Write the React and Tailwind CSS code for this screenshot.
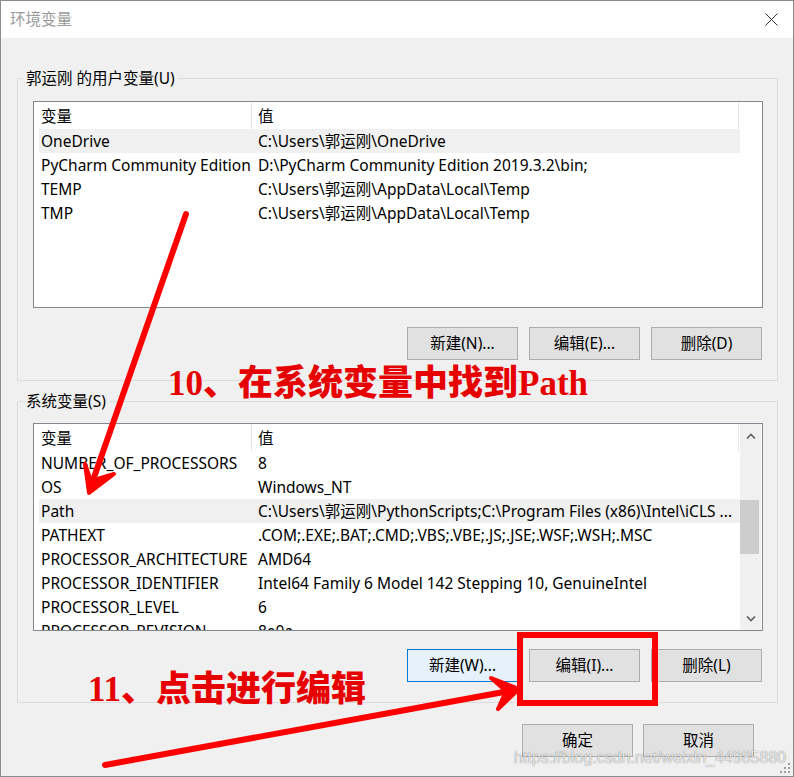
import React from "react";

const userVars = [
  ["OneDrive", "C:\\Users\\郭运刚\\OneDrive"],
  ["PyCharm Community Edition", "D:\\PyCharm Community Edition 2019.3.2\\bin;"],
  ["TEMP", "C:\\Users\\郭运刚\\AppData\\Local\\Temp"],
  ["TMP", "C:\\Users\\郭运刚\\AppData\\Local\\Temp"],
];

const sysVars = [
  ["NUMBER_OF_PROCESSORS", "8"],
  ["OS", "Windows_NT"],
  ["Path", "C:\\Users\\郭运刚\\PythonScripts;C:\\Program Files (x86)\\Intel\\iCLS ..."],
  ["PATHEXT", ".COM;.EXE;.BAT;.CMD;.VBS;.VBE;.JS;.JSE;.WSF;.WSH;.MSC"],
  ["PROCESSOR_ARCHITECTURE", "AMD64"],
  ["PROCESSOR_IDENTIFIER", "Intel64 Family 6 Model 142 Stepping 10, GenuineIntel"],
  ["PROCESSOR_LEVEL", "6"],
  ["PROCESSOR_REVISION", "8e0a"],
];

function Btn({ children, focused }) {
  return (
    <div
      className={
        focused
          ? "w-[111px] h-[33px] flex items-center justify-center border border-[#0078d7] bg-[#e5f1fb]"
          : "w-[111px] h-[33px] flex items-center justify-center border border-[#adadad] bg-[#e1e1e1]"
      }
    >
      {children}
    </div>
  );
}

function Chevron({ up }) {
  return (
    <svg width="10" height="6" viewBox="0 0 10 6">
      <polyline
        points={up ? "1,5.5 5,1.5 9,5.5" : "1,0.5 5,4.5 9,0.5"}
        fill="none"
        stroke="#606060"
        strokeWidth="1.6"
      />
    </svg>
  );
}

function VarList({ rows, hi, scroll, tall }) {
  return (
    <div
      className={
        tall
          ? "flex h-[208px] bg-white border border-[#828790] overflow-hidden"
          : "flex h-[207px] bg-white border border-[#828790] overflow-hidden"
      }
    >
      <div className="w-[706px] pl-[5px] overflow-hidden">
        <div className="flex h-[27px] w-[700px] items-center border-r border-[#e5e5e5]">
          <div className="w-[213px] h-full pl-[2px] pt-[2px] flex items-center border-r border-[#e5e5e5]">变量</div>
          <div className="pl-[6px] pt-[2px]">值</div>
        </div>
        {rows.map(([k, v], i) => (
          <div
            key={k}
            className={
              i === hi
                ? "flex h-[24px] items-center pt-[2px] bg-[#f0f0f0] whitespace-nowrap"
                : "flex h-[24px] items-center pt-[2px] whitespace-nowrap"
            }
          >
            <div className="w-[213px] shrink-0 pl-[2px] overflow-hidden">{k}</div>
            <div className="pl-[6px]">{v}</div>
          </div>
        ))}
      </div>
      {scroll ? (
        <div className="w-[21px] flex flex-col bg-[#f0f0f0]">
          <div className="h-[23px] flex items-center justify-center">
            <Chevron up />
          </div>
          <div className="h-[53px]" />
          <div className="h-[54px] w-[19px] bg-[#cdcdcd]" />
          <div className="flex-1" />
          <div className="h-[23px] flex items-center justify-center">
            <Chevron />
          </div>
        </div>
      ) : (
        <div className="w-[21px]" />
      )}
    </div>
  );
}

export default function App() {
  return (
    <div className="relative w-[794px] h-[777px] overflow-hidden bg-[#f0f0f0] border border-[#8c8c8c] text-[15.5px] text-black font-['Noto_Sans','Noto_Sans_CJK_SC',sans-serif]">
      <div className="h-[37px] bg-white flex items-center justify-between pl-[9px] pr-[15px]">
        <span className="text-[#9a9a9a]">环境变量</span>
        <svg width="13" height="13" viewBox="0 0 13 13">
          <path d="M0.5 0.5 L12.5 12.5 M12.5 0.5 L0.5 12.5" stroke="#333" strokeWidth="1" />
        </svg>
      </div>

      <div className="pl-[16px] pr-[15px]">
        <div className="relative mt-[40px] border border-[#dcdcdc] pt-[22px] pb-[20px] pl-[15px] pr-[14px]">
          <span className="absolute -top-[11px] left-[5px] px-[3px] leading-[20px] bg-[#f0f0f0]">
            郭运刚 的用户变量(U)
          </span>
          <VarList rows={userVars} hi={0} />
          <div className="mt-[19px] flex justify-end gap-[11px] pr-[1px]">
            <Btn>新建(N)...</Btn>
            <Btn>编辑(E)...</Btn>
            <Btn>删除(D)</Btn>
          </div>
        </div>

        <div className="relative mt-[20px] border border-[#dcdcdc] pt-[21px] pb-[20px] pl-[15px] pr-[14px]">
          <span className="absolute -top-[11px] left-[5px] px-[3px] leading-[20px] bg-[#f0f0f0]">
            系统变量(S)
          </span>
          <VarList rows={sysVars} hi={2} scroll tall />
          <div className="mt-[18px] flex justify-end gap-[11px] pr-[1px]">
            <Btn focused>新建(W)...</Btn>
            <Btn>编辑(I)...</Btn>
            <Btn>删除(L)</Btn>
          </div>
        </div>

        <div className="mt-[21px] flex justify-end gap-[10px] pr-[24px]">
          <Btn>确定</Btn>
          <Btn>取消</Btn>
        </div>
      </div>

      {/* annotations */}
      <div className="absolute left-[167px] top-[365px] text-[35px] leading-[36px] font-black text-[#e60000] whitespace-nowrap font-['Liberation_Serif','Noto_Sans_CJK_SC',serif]">
        10、在系统变量中找到Path
      </div>
      <div className="absolute left-[87px] top-[671px] text-[35px] leading-[36px] font-black text-[#e60000] whitespace-nowrap font-['Liberation_Serif','Noto_Sans_CJK_SC',serif]">
        11、点击进行编辑
      </div>

      <svg className="absolute left-0 top-0 pointer-events-none" width="794" height="777" viewBox="0 0 794 777">
        <g stroke="#ff0000" strokeLinecap="round" strokeLinejoin="round" fill="none">
          <line x1="185" y1="213" x2="89" y2="488" strokeWidth="6" />
          <polygon points="84,463 88,492 113,473 90,480" fill="#ff0000" strokeWidth="4" />
          <line x1="104" y1="764" x2="514" y2="689" strokeWidth="6" />
          <polygon points="490,677 518,688 497,708 505,690" fill="#ff0000" strokeWidth="4" />
          <rect x="519" y="634" width="135" height="68" strokeWidth="6" strokeLinecap="butt" strokeLinejoin="miter" />
        </g>
      </svg>

      <div className="absolute left-[513px] top-[746px] text-[16px] leading-[22px] whitespace-nowrap text-white/80 font-['Liberation_Sans',sans-serif] [text-shadow:0_0_1px_rgba(0,0,0,0.6)]">
        https://blog.csdn.net/weixin_44985880
      </div>

      <svg className="absolute right-[2px] bottom-[2px]" width="12" height="12" viewBox="0 0 12 12">
        <g fill="#a0a0a0">
          <rect x="9" y="1" width="2" height="2" />
          <rect x="5" y="5" width="2" height="2" />
          <rect x="9" y="5" width="2" height="2" />
          <rect x="1" y="9" width="2" height="2" />
          <rect x="5" y="9" width="2" height="2" />
          <rect x="9" y="9" width="2" height="2" />
        </g>
      </svg>
    </div>
  );
}
